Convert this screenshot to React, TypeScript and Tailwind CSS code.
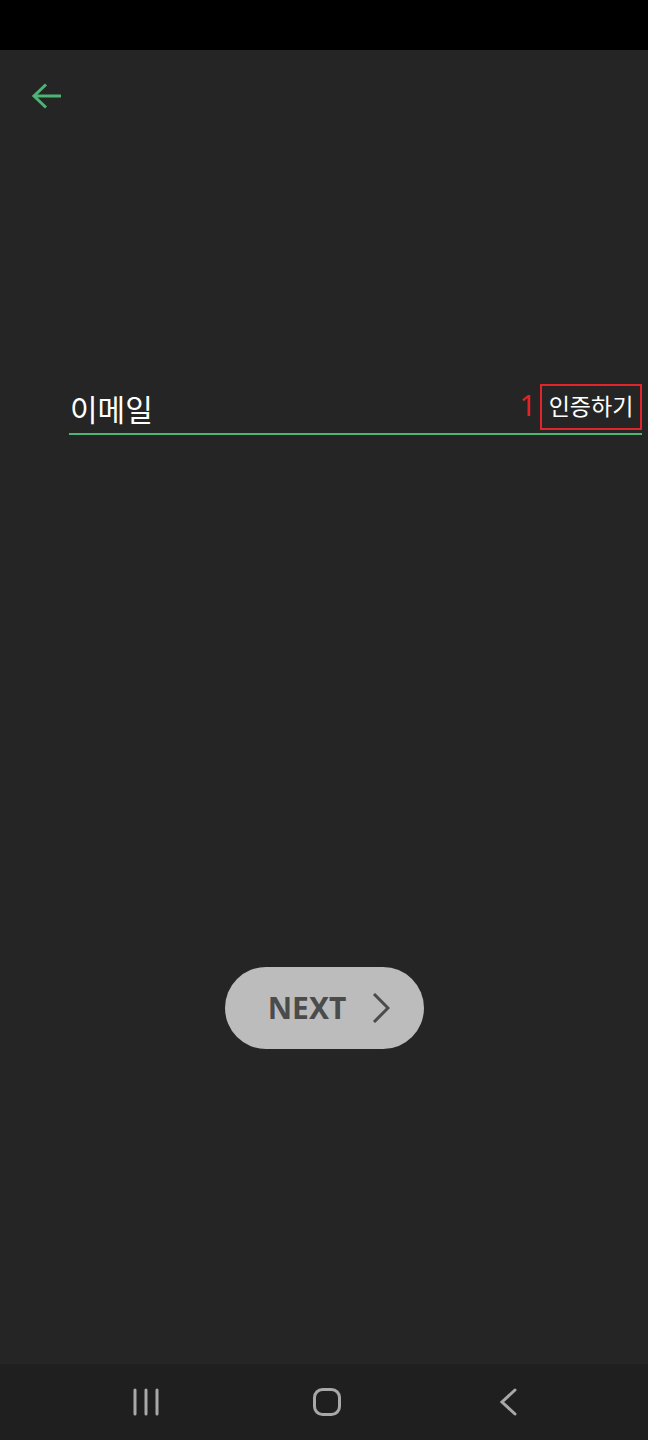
export default function App() {
  return (
    <div className="w-[648px] h-[1440px] flex flex-col bg-[#252525] font-['Noto_Sans','Noto_Sans_CJK_KR',sans-serif]">
      {/* status bar */}
      <div className="h-[50px] bg-black shrink-0" />

      {/* content */}
      <div className="flex-1 flex flex-col">
        <div className="h-[96px] flex items-center pl-[31px]">
          <svg width="32" height="32" viewBox="0 0 32 32" fill="none" stroke="#4db573" strokeWidth="3" strokeLinecap="butt">
            <path d="M4 14 H30" />
            <path d="M15 2.5 L3 14 L15 25.5" />
          </svg>
        </div>

        <div className="mt-[241px] ml-[69px] mr-[6px] flex items-end border-b-2 border-[#4db573] h-[48px]">
          <span className="flex-1 text-white text-[30px] leading-none pb-[8px] pl-[1px]">이메일</span>
          <span className="text-[#e0242a] text-[29px] leading-none pb-[14px] mr-[4px]">1</span>
          <span className="w-[102px] h-[46px] mb-[3px] border-2 border-[#e0242a] flex items-center justify-center text-white text-[23px] leading-none pb-[2px]">
            인증하기
          </span>
        </div>

        <div className="mt-[532px] flex justify-center">
          <button className="w-[199px] h-[82px] rounded-full bg-[#bcbcbc] flex items-center justify-center gap-[26px] pl-[10px]">
            <span className="text-[#4b4b4b] text-[30px] font-bold leading-none">NEXT</span>
            <svg width="18" height="30" viewBox="0 0 18 30" fill="none" stroke="#4b4b4b" strokeWidth="3">
              <path d="M2 1 L16 15 L2 29" />
            </svg>
          </button>
        </div>
      </div>

      {/* nav bar */}
      <div className="h-[76px] bg-[#1f1f1f] shrink-0 flex items-center pl-[133px]">
        <svg width="26" height="28" viewBox="0 0 26 28" fill="none" stroke="#a8a8a8" strokeWidth="3" strokeLinecap="round">
          <path d="M2 2 V26" />
          <path d="M13 2 V26" />
          <path d="M24 2 V26" />
        </svg>
        <svg className="ml-[154px]" width="28" height="28" viewBox="0 0 28 28" fill="none" stroke="#a8a8a8" strokeWidth="3">
          <rect x="1.5" y="1.5" width="25" height="25" rx="8" />
        </svg>
        <svg className="ml-[158px]" width="18" height="28" viewBox="0 0 18 28" fill="none" stroke="#a8a8a8" strokeWidth="3" strokeLinecap="round">
          <path d="M16 2 L3 14 L16 26" />
        </svg>
      </div>
    </div>
  )
}
